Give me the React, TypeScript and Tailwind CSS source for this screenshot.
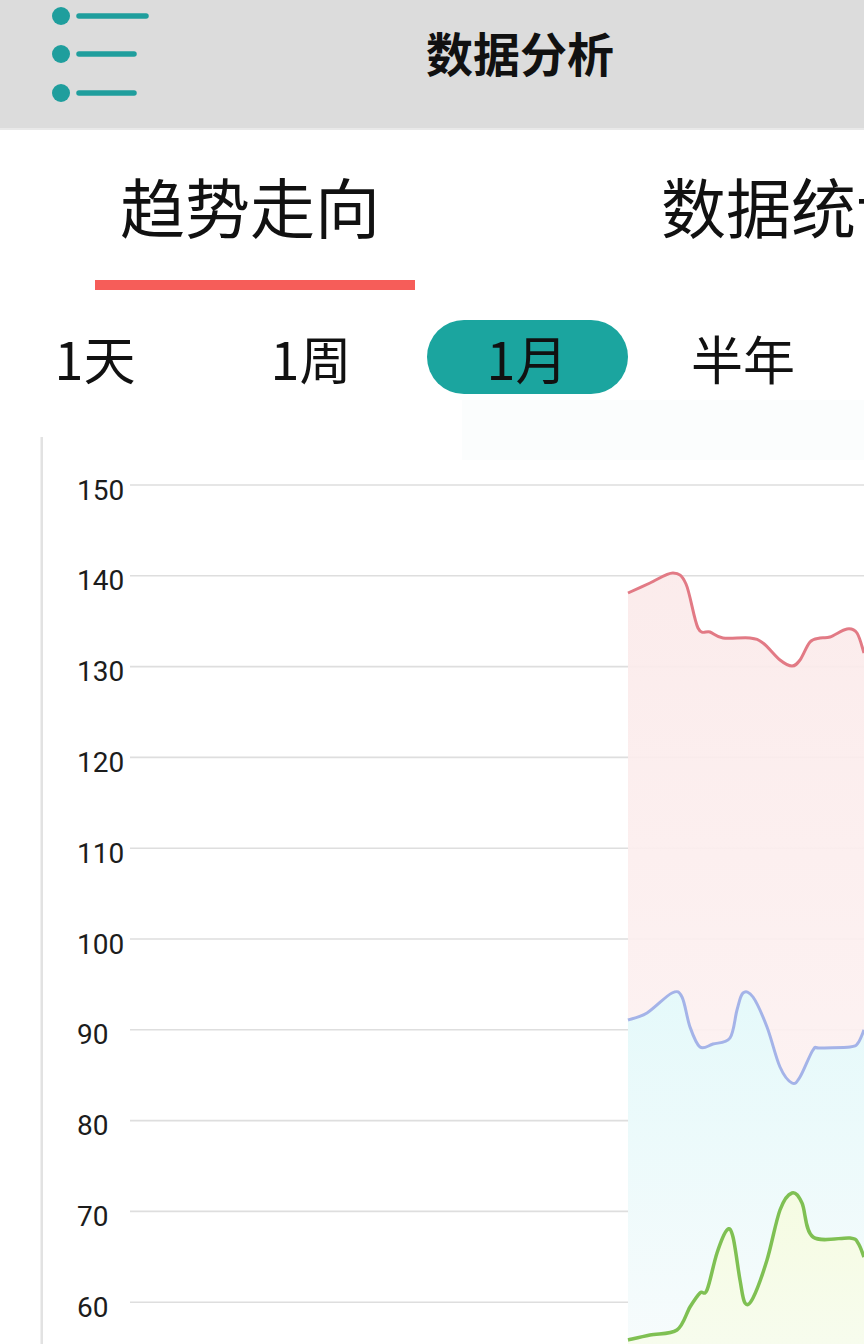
import React from 'react'

type Pt = [number, number]

// chart area starts at page y=400, so every y below is page y - 400
const red: Pt[] = [
  [628, 593], [650, 583], [673, 573], [686, 584], [698, 628], [710, 632], [723, 638],
  [750, 638], [763, 643], [780, 660], [792, 666], [800, 660], [810, 642], [820, 638],
  [830, 637], [847, 629], [857, 633], [864, 653],
]
const blue: Pt[] = [
  [628, 1020], [647, 1013], [672, 993], [682, 997], [690, 1027], [700, 1047], [713, 1044],
  [730, 1038], [737, 1010], [743, 993], [753, 997], [767, 1027], [780, 1067], [792, 1083],
  [800, 1077], [813, 1050], [820, 1048], [850, 1047], [858, 1043], [864, 1030],
]
const green: Pt[] = [
  [628, 1340], [650, 1335], [677, 1330], [690, 1307], [700, 1293], [707, 1290], [717, 1253],
  [727, 1230], [733, 1237], [740, 1280], [745, 1303], [753, 1298], [767, 1260], [780, 1210],
  [792, 1193], [802, 1203], [813, 1237], [850, 1238], [858, 1243], [864, 1257],
]

const shift = (pts: Pt[]): Pt[] => pts.map(([x, y]) => [x, y - 400])

function smooth(raw: Pt[]) {
  const pts = shift(raw)
  let d = `M${pts[0][0]},${pts[0][1]}`
  for (let i = 0; i < pts.length - 1; i++) {
    const p0 = pts[i - 1] || pts[i]
    const p1 = pts[i]
    const p2 = pts[i + 1]
    const p3 = pts[i + 2] || p2
    const c1x = p1[0] + (p2[0] - p0[0]) / 6
    const c1y = p1[1] + (p2[1] - p0[1]) / 6
    const c2x = p2[0] - (p3[0] - p1[0]) / 6
    const c2y = p2[1] - (p3[1] - p1[1]) / 6
    d += ` C${c1x},${c1y} ${c2x},${c2y} ${p2[0]},${p2[1]}`
  }
  return d
}

const area = (raw: Pt[]) => `${smooth(raw)} L864,944 L628,944 Z`

const labels = [150, 140, 130, 120, 110, 100, 90, 80, 70, 60]

const Chart = () => {
  return (
    <svg width="864" height="944" viewBox="0 0 864 944" className="block">
      <defs>
        <linearGradient id="gRed" x1="0" y1="0" x2="0" y2="1">
          <stop offset="0%" stopColor="#fbeaea" />
          <stop offset="100%" stopColor="#fdf4f4" />
        </linearGradient>
        <linearGradient id="gBlue" x1="0" y1="0" x2="0" y2="1">
          <stop offset="0%" stopColor="#e3fafb" />
          <stop offset="60%" stopColor="#eefbfc" />
          <stop offset="100%" stopColor="#f6fcfd" />
        </linearGradient>
        <linearGradient id="gGreen" x1="0" y1="0" x2="0" y2="1">
          <stop offset="0%" stopColor="#f6fce0" />
          <stop offset="100%" stopColor="#f7fcec" />
        </linearGradient>
      </defs>

      <rect x="462" y="0" width="402" height="60" fill="#fbfdfd" />
      <rect x="40.5" y="37" width="2.5" height="907" fill="#e2e2e2" />

      {labels.map((v, i) => {
        const y = 85 + i * 90.8
        return (
          <g key={v}>
            <line x1="130" x2="864" y1={y} y2={y} stroke="#dedede" strokeWidth="1.6" />
            <text x="77" y={y + 14.5} fontSize="28" fill="#1c1c1c" fontFamily="Roboto, 'Noto Sans', sans-serif">
              {v}
            </text>
          </g>
        )
      })}

      <path d={area(red)} fill="url(#gRed)" opacity="0.92" />
      <path d={area(blue)} fill="url(#gBlue)" opacity="0.92" />
      <path d={area(green)} fill="url(#gGreen)" opacity="0.92" />

      <path d={smooth(red)} fill="none" stroke="#e27a85" strokeWidth="3" />
      <path d={smooth(blue)} fill="none" stroke="#a4b3e8" strokeWidth="3" />
      <path d={smooth(green)} fill="none" stroke="#7fc053" strokeWidth="3.5" />
    </svg>
  )
}

const MenuIcon = () => (
  <svg width="176" height="128" viewBox="0 0 176 128">
    <g fill="#1f9e9d">
      <circle cx="61" cy="16" r="9" />
      <circle cx="61" cy="54" r="9" />
      <circle cx="61" cy="93" r="9" />
    </g>
    <g stroke="#1f9e9d" strokeWidth="5.5" strokeLinecap="round">
      <line x1="79" y1="16" x2="146" y2="16" />
      <line x1="79" y1="54" x2="134" y2="54" />
      <line x1="79" y1="93" x2="134" y2="93" />
    </g>
  </svg>
)

const App = () => {
  const ranges = ['1天', '1周', '1月', '半年']

  return (
    <div
      className="w-[864px] h-[1344px] overflow-hidden bg-white text-[#111]"
      style={{ fontFamily: "'Noto Sans CJK SC', 'Noto Sans', sans-serif" }}
    >
      <header className="h-[130px] bg-[#dcdcdc] border-b-2 border-[#e9e9e9] flex">
        <MenuIcon />
        <h1 className="flex-1 text-center text-[47px] font-bold leading-none pt-[28px]">数据分析</h1>
      </header>

      <div className="flex pt-[43px] whitespace-nowrap">
        <div className="ml-[95px] w-[320px] shrink-0">
          <div className="pl-[25px] text-[65px] leading-[65px]">趋势走向</div>
          <div className="mt-[42px] h-[10px] bg-[#f65d59]" />
        </div>
        <div className="ml-[221px] w-[320px] shrink-0">
          <div className="pl-[25px] text-[65px] leading-[65px]">数据统计</div>
        </div>
      </div>

      <div className="flex mt-[30px]">
        {ranges.map((r) => (
          <div key={r} className="w-[216px] shrink-0 pr-[26px] flex justify-center">
            <div
              className={
                r === '1月'
                  ? 'w-[201px] h-[74px] shrink-0 rounded-full bg-[#1ba59f] flex items-center justify-center pt-[2px] text-[52px] leading-none'
                  : 'h-[74px] shrink-0 flex items-center justify-center pt-[2px] text-[52px] leading-none'
              }
            >
              {r}
            </div>
          </div>
        ))}
      </div>

      <div className="mt-[6px]">
        <Chart />
      </div>
    </div>
  )
}

export default App
